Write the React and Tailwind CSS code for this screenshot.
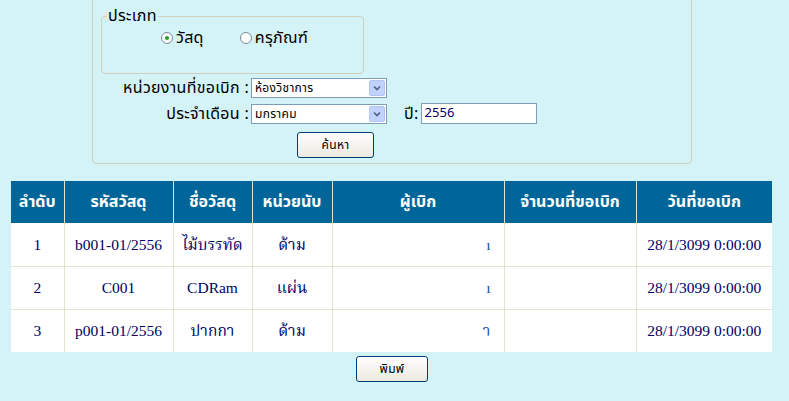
const rows = [
  { no: "1", code: "b001-01/2556", name: "ไม้บรรทัด", unit: "ด้าม", tail: "ı", date: "28/1/3099 0:00:00" },
  { no: "2", code: "C001", name: "CDRam", unit: "แผ่น", tail: "ı", date: "28/1/3099 0:00:00" },
  { no: "3", code: "p001-01/2556", name: "ปากกา", unit: "ด้าม", tail: "า", date: "28/1/3099 0:00:00" },
];

const heads = ["ลำดับ", "รหัสวัสดุ", "ชื่อวัสดุ", "หน่วยนับ", "ผู้เบิก", "จำนวนที่ขอเบิก", "วันที่ขอเบิก"];

function Radio({ checked, label }) {
  return (
    <label className="flex items-center gap-[3px]">
      <span className="w-[12px] h-[12px] rounded-full border border-[#7a8a99] bg-white flex items-center justify-center">
        {checked && <span className="w-[4px] h-[4px] rounded-full bg-[#21a121]" />}
      </span>
      <span>{label}</span>
    </label>
  );
}

function Select({ value }) {
  return (
    <div className="w-[136px] h-[20px] border border-[#7f9db9] bg-white flex items-center text-[12px] text-black">
      <span className="flex-1 pl-[3px] leading-none">{value}</span>
      <span className="w-[16px] h-[16px] mr-[1px] rounded-[2px] bg-[#c1d2fc] border border-[#b0c4f5] flex items-center justify-center">
        <svg width="8" height="6" viewBox="0 0 8 6">
          <path d="M1 1.5 L4 4.5 L7 1.5" fill="none" stroke="#4d6185" strokeWidth="1.6" />
        </svg>
      </span>
    </div>
  );
}

function XpButton({ children, w }) {
  return (
    <button className={`${w} h-[26px] rounded-[3px] border border-[#003c74] bg-gradient-to-b from-white to-[#ece9e0] text-[12px] text-black`}>
      {children}
    </button>
  );
}

export default function App() {
  return (
    <div
      className="min-h-[401px] bg-[#d4f3f7] flex flex-col text-[16px] tracking-[0.3px] text-black"
      style={{ fontFamily: 'Tahoma, "Noto Sans Thai", "Loma", "Garuda", sans-serif' }}
    >
      {/* SEARCH BOX */}
      <div className="ml-[92px] w-[600px] h-[164px] border border-t-0 border-[#d0cebd] rounded-b-[5px] flex flex-col">
        <fieldset className="ml-[8px] mt-[7px] w-[263px] h-[67px] border border-[#d0cebd] rounded-[4px] pl-[5px]">
          <legend className="px-[1px] leading-[18px]">ประเภท</legend>
          <div className="flex items-center gap-[36px] ml-[54px] mt-[1px]">
            <Radio checked label="วัสดุ" />
            <Radio label="ครุภัณฑ์" />
          </div>
        </fieldset>

        <div className="flex items-center mt-[4px] h-[20px]">
          <span className="w-[158px] text-right pr-[2px]">หน่วยงานที่ขอเบิก :</span>
          <Select value="ห้องวิชาการ" />
        </div>
        <div className="flex items-center mt-[5px] h-[21px]">
          <span className="w-[158px] text-right pr-[2px]">ประจำเดือน :</span>
          <Select value="มกราคม" />
          <span className="ml-[17px] mr-[2px]">ปี:</span>
          <div className="w-[116px] h-[21px] border border-[#7f9db9] bg-white text-[13px] tracking-normal text-[#000066] pl-[3px] flex items-center">2556</div>
        </div>
        <div className="flex mt-[8px] ml-[204px]">
          <XpButton w="w-[77px]">ค้นหา</XpButton>
        </div>
      </div>

      {/* RESULT TABLE */}
      <table className="ml-[11px] mt-[17px] w-[761px] table-fixed border-collapse">
        <colgroup>
          <col className="w-[53px]" />
          <col className="w-[109px]" />
          <col className="w-[79px]" />
          <col className="w-[80px]" />
          <col className="w-[172px]" />
          <col className="w-[132px]" />
          <col className="w-[136px]" />
        </colgroup>
        <thead>
          <tr className="h-[42px] bg-[#006699]">
            {heads.map((h, i) => (
              <th
                key={h}
                className={`text-white font-bold text-[16px] tracking-normal text-center ${i > 0 ? "border-l border-[#e6e3cc]" : ""}`}
              >
                {h}
              </th>
            ))}
          </tr>
        </thead>
        <tbody className="tracking-normal" style={{ fontFamily: '"Liberation Serif", "Times New Roman", "Noto Serif Thai", serif' }}>
          {rows.map((r, idx) => (
            <tr key={r.no} className={`h-[43px] bg-white text-[#000066] text-[15.5px] ${idx > 0 ? "border-t border-[#e6e3cc]" : ""}`}>
              <td className="text-center">{r.no}</td>
              <td className="text-center border-l border-[#e6e3cc]">{r.code}</td>
              <td className="text-center border-l border-[#e6e3cc]">{r.name}</td>
              <td className="text-center border-l border-[#e6e3cc]">{r.unit}</td>
              <td className="text-right pr-[13px] border-l border-[#e6e3cc] text-[#1b4fa8]">{r.tail}</td>
              <td className="border-l border-[#e6e3cc]"></td>
              <td className="text-center border-l border-[#e6e3cc]">{r.date}</td>
            </tr>
          ))}
        </tbody>
      </table>

      <div className="flex ml-[356px] mt-[4px]">
        <XpButton w="w-[72px]">พิมพ์</XpButton>
      </div>
    </div>
  );
}
